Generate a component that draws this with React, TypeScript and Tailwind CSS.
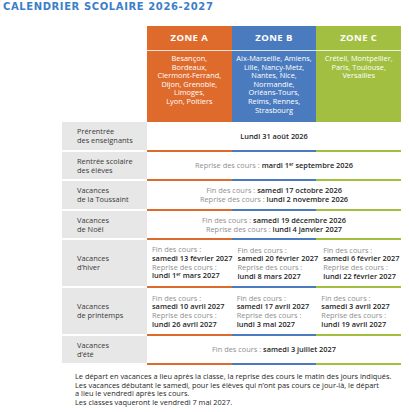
import React from "react"

const ZONES = [
  { name: "ZONE A", bg: "bg-[#de6a2c]", line: "border-[#de6a2c]", cities: ["Besançon,", "Bordeaux,", "Clermont-Ferrand,", "Dijon, Grenoble,", "Limoges,", "Lyon, Poitiers"] },
  { name: "ZONE B", bg: "bg-[#4b7bbf]", line: "border-[#4b7bbf]", cities: ["Aix-Marseille, Amiens,", "Lille, Nancy-Metz,", "Nantes, Nice,", "Normandie,", "Orléans-Tours,", "Reims, Rennes,", "Strasbourg"] },
  { name: "ZONE C", bg: "bg-[#a2bf42]", line: "border-[#a2bf42]", cities: ["Créteil, Montpellier,", "Paris, Toulouse,", "Versailles"] },
]

function Lines() {
  return (
    <div className="absolute bottom-0 left-0 right-0 flex">
      {ZONES.map((z) => (
        <div key={z.name} className={`h-[2px] flex-1 border-b-2 ${z.line}`} />
      ))}
    </div>
  )
}

function Row({ label, height, children }: { label: React.ReactNode; height: string; children: React.ReactNode }) {
  return (
    <div className={`flex ${height}`}>
      <div className="w-[85px] shrink-0 pb-[2px]">
        <div className="h-full bg-[#e7e7e7] pl-[15px] flex flex-col justify-center text-[#3a3a3a] leading-[9px]">{label}</div>
      </div>
      <div className="relative flex-1 pb-[2px]">
        {children}
        <Lines />
      </div>
    </div>
  )
}

const Light = ({ children }: { children: React.ReactNode }) => <span className="text-[#8f8f8f]">{children}</span>
const Bold = ({ children }: { children: React.ReactNode }) => <span className="text-[#262626] font-semibold">{children}</span>
const Er = () => <span className="text-[4.5px] relative -top-[2px]">er</span>

function Merged({ children }: { children: React.ReactNode }) {
  return <div className="h-full flex flex-col items-center justify-center leading-[9px] whitespace-nowrap">{children}</div>
}

function Split({ cells }: { cells: [React.ReactNode, React.ReactNode][] }) {
  return (
    <div className="h-full flex">
      {cells.map((c, i) => (
        <div key={i} className="flex-1 pl-[5px] flex flex-col justify-center leading-[8.6px] whitespace-nowrap">
          <Light>Fin des cours :</Light>
          <Bold>{c[0]}</Bold>
          <Light>Reprise des cours :</Light>
          <Bold>{c[1]}</Bold>
        </div>
      ))}
    </div>
  )
}

export default function App() {
  return (
    <div className="w-[409px] h-[412px] bg-white font-['Open_Sans',sans-serif] text-[7.4px] overflow-hidden">
      <h1 className="pl-[3px] pt-[3px] text-[10px] leading-[8px] font-black tracking-[0.6px] text-[#3c7ec9] font-['DejaVu_Sans',sans-serif]">
        CALENDRIER SCOLAIRE 2026-2027
      </h1>

      <div className="ml-[62px] w-[339px] mt-[15px]">
        <div className="ml-[85px] flex">
          {ZONES.map((z) => (
            <div key={z.name} className={`flex-1 ${z.bg} text-white`}>
              <div className="h-[24px] flex items-center justify-center text-[9.5px] font-bold tracking-[0.4px]">{z.name}</div>
              <div className="h-px bg-white/80" />
              <div className="h-[71px] pt-[3px] flex flex-col items-center leading-[8.6px] whitespace-nowrap">
                {z.cities.map((c) => (
                  <span key={c}>{c}</span>
                ))}
              </div>
            </div>
          ))}
        </div>

        <Row height="h-[30px]" label={<><span>Prérentrée</span><span>des enseignants</span></>}>
          <Merged>
            <Bold>Lundi 31 août 2026</Bold>
          </Merged>
        </Row>
        <Row height="h-[29px]" label={<><span>Rentrée scolaire</span><span>des élèves</span></>}>
          <Merged>
            <span>
              <Light>Reprise des cours : </Light>
              <Bold>
                mardi 1<Er /> septembre 2026
              </Bold>
            </span>
          </Merged>
        </Row>
        <Row height="h-[30px]" label={<><span>Vacances</span><span>de la Toussaint</span></>}>
          <Merged>
            <span>
              <Light>Fin des cours : </Light>
              <Bold>samedi 17 octobre 2026</Bold>
            </span>
            <span>
              <Light>Reprise des cours : </Light>
              <Bold>lundi 2 novembre 2026</Bold>
            </span>
          </Merged>
        </Row>
        <Row height="h-[29px]" label={<><span>Vacances</span><span>de Noël</span></>}>
          <Merged>
            <span>
              <Light>Fin des cours : </Light>
              <Bold>samedi 19 décembre 2026</Bold>
            </span>
            <span>
              <Light>Reprise des cours : </Light>
              <Bold>lundi 4 janvier 2027</Bold>
            </span>
          </Merged>
        </Row>
        <Row height="h-[48px]" label={<><span>Vacances</span><span>d’hiver</span></>}>
          <Split
            cells={[
              ["samedi 13 février 2027", <>lundi 1<Er /> mars 2027</>],
              ["samedi 20 février 2027", "lundi 8 mars 2027"],
              ["samedi 6 février 2027", "lundi 22 février 2027"],
            ]}
          />
        </Row>
        <Row height="h-[48px]" label={<><span>Vacances</span><span>de printemps</span></>}>
          <Split
            cells={[
              ["samedi 10 avril 2027", "lundi 26 avril 2027"],
              ["samedi 17 avril 2027", "lundi 3 mai 2027"],
              ["samedi 3 avril 2027", "lundi 19 avril 2027"],
            ]}
          />
        </Row>
        <Row height="h-[29px]" label={<><span>Vacances</span><span>d’été</span></>}>
          <Merged>
            <span>
              <Light>Fin des cours : </Light>
              <Bold>samedi 3 juillet 2027</Bold>
            </span>
          </Merged>
        </Row>
      </div>

      <div className="ml-[75px] mt-[7px] text-[7.4px] text-[#262626] leading-[8.6px] flex flex-col whitespace-nowrap">
        <span>Le départ en vacances a lieu après la classe, la reprise des cours le matin des jours indiqués.</span>
        <span>Les vacances débutant le samedi, pour les élèves qui n’ont pas cours ce jour-là, le départ</span>
        <span>a lieu le vendredi après les cours.</span>
        <span>Les classes vaqueront le vendredi 7 mai 2027.</span>
      </div>
    </div>
  )
}
